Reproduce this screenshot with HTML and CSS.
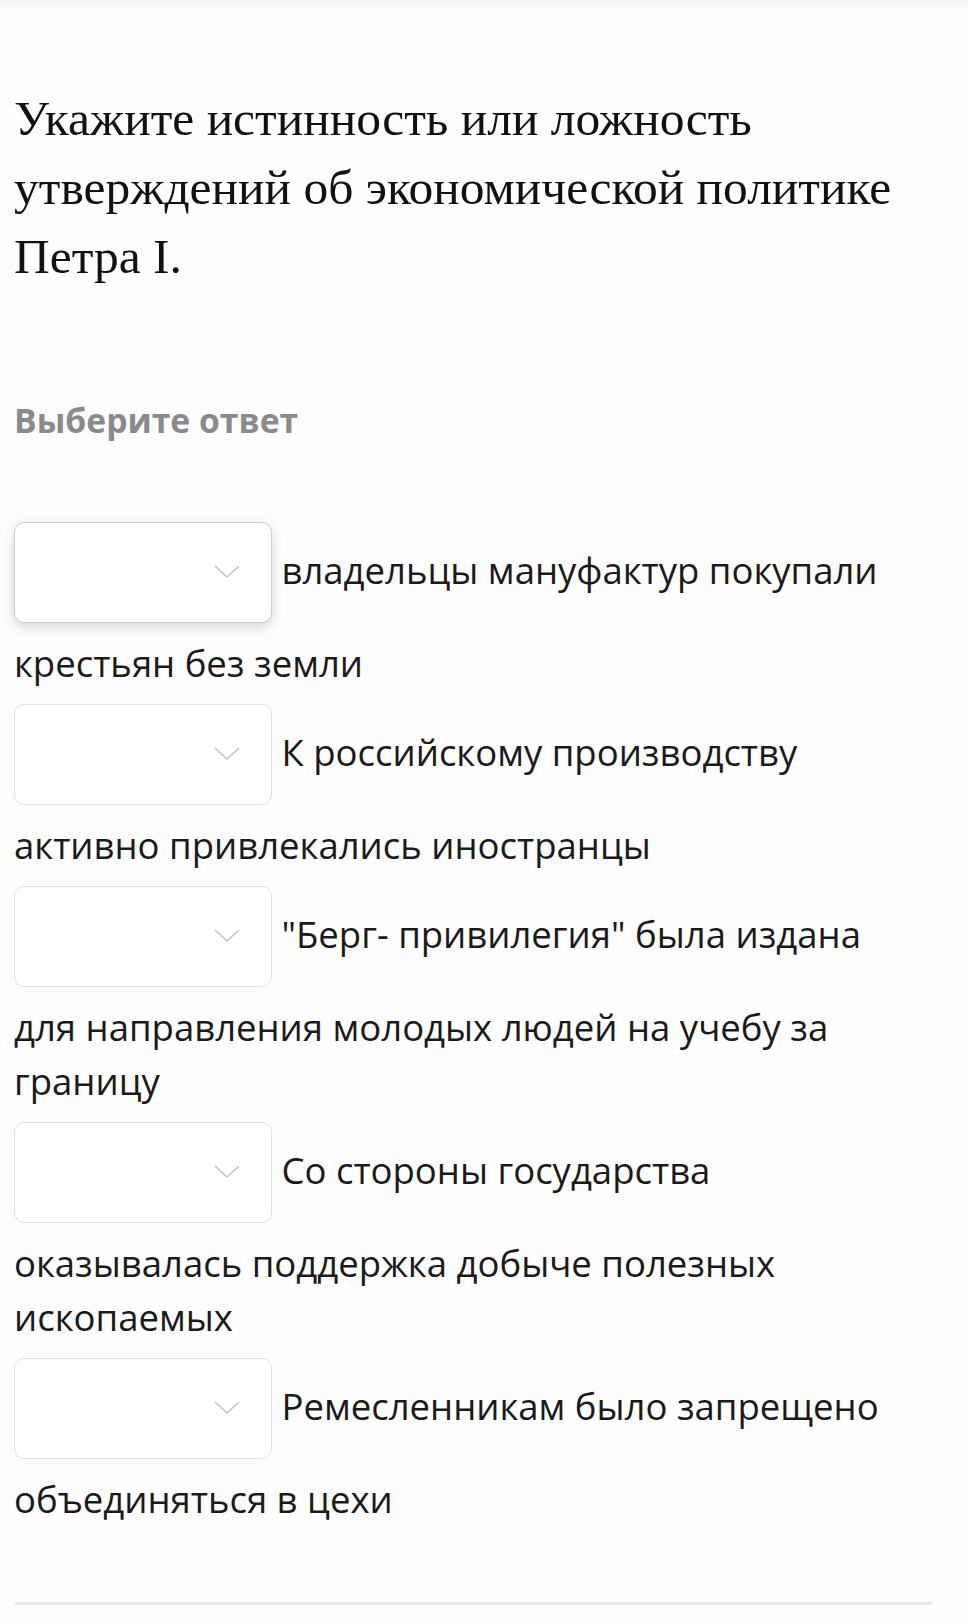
FILE: index.html
```html
<!DOCTYPE html>
<html lang="ru">
<head>
  <meta charset="UTF-8" />
  <meta name="viewport" content="width=device-width, initial-scale=1" />
  <title>Выберите ответ</title>
  <link rel="stylesheet" href="styles.css">
</head>
<body>
  <div class="top-bar"></div>

  <div class="question">
    <h1 class="question-title">Укажите истинность или ложность утверждений об экономической политике Петра I.</h1>

    <div class="answer-label">Выберите ответ</div>

    <div class="answers">
      <p class="answer-row">
        <span class="select-box focused"><svg class="chevron" viewBox="0 0 26 13"><path d="M1 1 L13 12 L25 1" /></svg></span>
        владельцы мануфактур покупали крестьян без земли
      </p>
      <p class="answer-row">
        <span class="select-box"><svg class="chevron" viewBox="0 0 26 13"><path d="M1 1 L13 12 L25 1" /></svg></span>
        К российскому производству активно привлекались иностранцы
      </p>
      <p class="answer-row">
        <span class="select-box"><svg class="chevron" viewBox="0 0 26 13"><path d="M1 1 L13 12 L25 1" /></svg></span>
        "Берг- привилегия" была издана для направления молодых людей на учебу за границу
      </p>
      <p class="answer-row">
        <span class="select-box"><svg class="chevron" viewBox="0 0 26 13"><path d="M1 1 L13 12 L25 1" /></svg></span>
        Со стороны государства оказывалась поддержка добыче полезных ископаемых
      </p>
      <p class="answer-row">
        <span class="select-box"><svg class="chevron" viewBox="0 0 26 13"><path d="M1 1 L13 12 L25 1" /></svg></span>
        Ремесленникам было запрещено объединяться в цехи
      </p>
    </div>

    <hr class="divider">
  </div>
</body>
</html>
```

FILE: styles.css
```css
:root {
  --text: #1a1a1a;
  --muted: #8a8a8a;
  --border: #e0e0e0;
  --bg: #fdfdfd;
  --font-serif: 'Liberation Serif', 'Times New Roman', serif;
  --font-sans: 'Open Sans', sans-serif;
}
body {
  margin: 0;
  padding: 0;
  background: var(--bg);
  color: var(--text);
  font-family: var(--font-sans);
}
.top-bar {
  height: 10px;
  background: linear-gradient(#f2f2f2, var(--bg));
}
.question {
  padding: 0 36px 0 14px;
}
.question-title {
  margin: 74px 0 0;
  font-family: var(--font-serif);
  font-weight: normal;
  font-size: 49.5px;
  line-height: 69px;
  color: #111;
}
.answer-label {
  margin-top: 106px;
  font-size: 33.7px;
  font-weight: 700;
  color: var(--muted);
}
.answers {
  margin-top: 65px;
  padding-right: 22px;
}
.answer-row {
  margin: 0;
  font-size: 36.5px;
  line-height: 54px;
}
.select-box {
  display: inline-block;
  position: relative;
  box-sizing: border-box;
  width: 258px;
  height: 101px;
  margin: 14px 0 13px;
  vertical-align: -52px;
  border: 1.5px solid var(--border);
  border-radius: 10px;
  background: #fff;
}
.select-box.focused {
  border-color: #cdcdcd;
  box-shadow: 0 4px 12px rgba(0,0,0,0.16);
}
.chevron {
  position: absolute;
  right: 31px;
  top: 42px;
  width: 26px;
  height: 13px;
  fill: none;
  stroke: #c2c2c2;
  stroke-width: 1.5;
}
.divider {
  margin: 76px 0 0 1px;
  border: none;
  height: 3px;
  background: #e6e6e6;
}
```
